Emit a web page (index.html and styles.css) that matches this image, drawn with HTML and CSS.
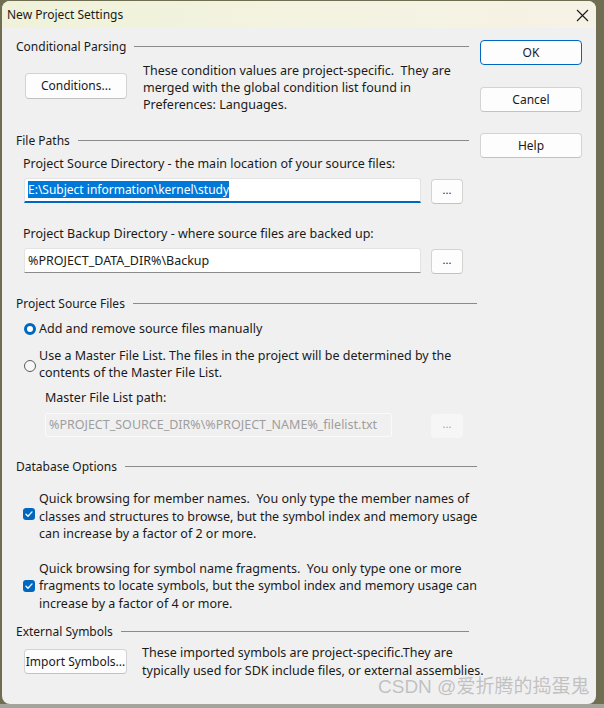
FILE: index.html
```html
<!DOCTYPE html>
<html>
<head>
<meta charset="utf-8">
<link rel="stylesheet" href="styles.css">
</head>
<body>
<div class="window">
  <div class="titlebar">
    <span class="title">New Project Settings</span>
    <svg class="close" width="13" height="13" viewBox="0 0 13 13"><path d="M1 1L12 12M12 1L1 12" stroke="#1a1a1a" stroke-width="1.1" fill="none"/></svg>
  </div>
  <div class="content">
    <div class="main">
      <div class="head short">Conditional Parsing</div>
      <div class="cond-row">
        <div class="btn btn-cond">Conditions...</div>
        <div class="para">These condition values are project-specific.&nbsp; They are<br>merged with the global condition list found in<br>Preferences: Languages.</div>
      </div>

      <div class="head short gap-fp">File Paths</div>
      <div class="label lbl-src">Project Source Directory - the main location of your source files:</div>
      <div class="field-row">
        <div class="input focused"><span class="sel">E:\Subject information\kernel\study</span></div>
        <div class="btn dots">...</div>
      </div>
      <div class="label lbl-bak">Project Backup Directory - where source files are backed up:</div>
      <div class="field-row">
        <div class="input">%PROJECT_DATA_DIR%\Backup</div>
        <div class="btn dots">...</div>
      </div>

      <div class="head gap-psf">Project Source Files</div>
      <div class="opt opt1">
        <span class="radio on"></span>
        <span>Add and remove source files manually</span>
      </div>
      <div class="opt opt2">
        <span class="radio"></span>
        <span>Use a Master File List. The files in the project will be determined by the<br>contents of the Master File List.</span>
      </div>
      <div class="label lbl-mfl">Master File List path:</div>
      <div class="field-row mfl-row">
        <div class="input disabled">%PROJECT_SOURCE_DIR%\%PROJECT_NAME%_filelist.txt</div>
        <div class="btn dots dis">...</div>
      </div>

      <div class="head gap-db">Database Options</div>
      <div class="opt chk1">
        <span class="check"><svg width="12" height="12" viewBox="0 0 12 12"><path d="M3 6.2L5 8.2L9 3.9" stroke="#fff" stroke-width="1.3" fill="none" stroke-linecap="round" stroke-linejoin="round"/></svg></span>
        <span class="tall">Quick browsing for member names.&nbsp; You only type the member names of<br>classes and structures to browse, but the symbol index and memory usage<br>can increase by a factor of 2 or more.</span>
      </div>
      <div class="opt chk2">
        <span class="check"><svg width="12" height="12" viewBox="0 0 12 12"><path d="M3 6.2L5 8.2L9 3.9" stroke="#fff" stroke-width="1.3" fill="none" stroke-linecap="round" stroke-linejoin="round"/></svg></span>
        <span class="tall">Quick browsing for symbol name fragments.&nbsp; You only type one or more<br>fragments to locate symbols, but the symbol index and memory usage can<br>increase by a factor of 4 or more.</span>
      </div>

      <div class="head short gap-ext">External Symbols</div>
      <div class="imp-row">
        <div class="btn btn-imp">Import Symbols...</div>
        <div class="para tall">These imported symbols are project-specific.They are<br>typically used for SDK include files, or external assemblies.</div>
      </div>
    </div>
    <div class="side">
      <div class="btn side-btn default">OK</div>
      <div class="btn side-btn">Cancel</div>
      <div class="btn side-btn">Help</div>
    </div>
  </div>
  <div class="watermark">CSDN @爱折腾的捣蛋鬼</div>
</div>
</body>
</html>
```

FILE: styles.css
```css
html, body {
  margin: 0;
  padding: 0;
}
body {
  width: 604px;
  height: 708px;
  overflow: hidden;
  background: linear-gradient(to bottom, #6f6e52 0, #6f6e52 704px, #a3a59c 704px);
  font-family: "Noto Sans", "Noto Sans CJK SC", sans-serif;
  font-size: 12.5px;
  line-height: 17px;
  color: #1a1a1a;
}
.window {
  position: relative;
  margin: 1px 0 0 2px;
  width: 594px;
  height: 703px;
  background: #f0f0f0;
  border-radius: 8px;
  overflow: hidden;
}
.titlebar {
  height: 27px;
  display: flex;
  align-items: center;
  justify-content: space-between;
  padding: 0 7px 0 5px;
  background: linear-gradient(to right, #eff2d9, #f4f3e2 60%, #f6f2e6);
}
.title {
  font-size: 12px;
}
.close {
  margin-top: 1px;
}
.content {
  display: flex;
  padding-left: 14px;
}
.main {
  width: 461px;
  flex: none;
  padding-top: 10px;
}
.side {
  width: 102px;
  flex: none;
  margin-left: 3px;
  padding-top: 12px;
  display: flex;
  flex-direction: column;
  gap: 21.5px;
}
.head {
  display: flex;
  align-items: center;
  height: 17px;
  font-size: 12px;
}
.head::after {
  content: "";
  flex: 1;
  height: 1px;
  background: #8a8a8a;
  margin-left: 8px;
}
.head.short {
  margin-right: 8px;
}
.btn {
  box-sizing: border-box;
  background: #fdfdfd;
  border: 1px solid #d3d3d3;
  border-bottom-color: #c2c2c2;
  border-radius: 4px;
  text-align: center;
  white-space: nowrap;
  font-size: 12px;
  flex: none;
}
.side-btn {
  height: 25px;
  line-height: 23px;
}
.side-btn.default {
  border: 1px solid #0067c0;
}
.cond-row {
  display: flex;
  align-items: center;
  margin-top: 7px;
  padding-left: 9px;
  gap: 16px;
}
.btn-cond {
  width: 102px;
  height: 26px;
  line-height: 24px;
  margin-bottom: 3px;
}
.para {
  white-space: nowrap;
  flex: none;
}
.gap-fp { margin-top: 19px; }
.label {
  white-space: nowrap;
}
.lbl-src {
  margin-top: 6px;
  padding-left: 7px;
}
.lbl-bak {
  margin-top: 21px;
  padding-left: 7px;
}
.field-row {
  display: flex;
  align-items: flex-start;
  gap: 10px;
  margin-top: 6px;
  padding-left: 8px;
}
.input {
  box-sizing: border-box;
  width: 397px;
  height: 25px;
  flex: none;
  background: #fff;
  border: 1px solid #e3e3e3;
  border-bottom: 1px solid #8a8a8a;
  border-radius: 3px 3px 0 0;
  padding: 3px 0 0 3px;
  white-space: nowrap;
  overflow: hidden;
}
.input.focused {
  border-bottom: 2px solid #0067c0;
  padding-top: 2px;
}
.sel {
  background: #0078d7;
  color: #fff;
  display: inline-block;
  line-height: 17px;
  font-size: 12px;
}
.dots {
  width: 32px;
  height: 25px;
  margin-top: 1px;
  line-height: 20px;
  font-size: 11px;
}
.gap-psf { margin-top: 21px; }
.opt {
  display: flex;
  align-items: center;
  gap: 3px;
  white-space: nowrap;
}
.opt1 {
  margin-top: 8px;
  padding-left: 8px;
}
.opt2 {
  margin-top: 10px;
  padding-left: 8px;
}
.opt2 .radio {
  margin-top: 3px;
}
.radio {
  box-sizing: border-box;
  width: 12px;
  height: 12px;
  border-radius: 50%;
  border: 1px solid #5c5c5c;
  background: #f7f7f7;
  flex: none;
}
.radio.on {
  border: 3.5px solid #0067c0;
  background: #fff;
}
.lbl-mfl {
  margin-top: 8px;
  padding-left: 29px;
}
.mfl-row {
  margin-top: 7px;
  padding-left: 29px;
  gap: 39px;
}
.input.disabled {
  width: 347px;
  height: 24px;
  background: #f0f0f0;
  border: 1px solid #fafafa;
  color: #9e9e9e;
  border-radius: 2px;
  padding-top: 2px;
}
.dots.dis {
  height: 24px;
  border: none;
  background: #f6f6f6;
  color: #a0a0a0;
}
.gap-db { margin-top: 20px; }
.check {
  box-sizing: border-box;
  width: 12px;
  height: 12px;
  border-radius: 3px;
  background: #0067c0;
  flex: none;
  display: flex;
}
.check svg {
  display: block;
}
.tall {
  line-height: 17.5px;
}
.chk1 {
  margin-top: 15px;
  padding-left: 7px;
  gap: 4px;
}
.chk1 .check {
  margin-bottom: 4px;
}
.chk2 {
  margin-top: 17px;
  padding-left: 7px;
  gap: 4px;
}
.gap-ext { margin-top: 11px; }
.imp-row {
  display: flex;
  align-items: center;
  gap: 15px;
  margin-top: 4px;
  padding-left: 8px;
}
.btn-imp {
  width: 103px;
  height: 25px;
  line-height: 23px;
  padding: 0;
  overflow: hidden;
  font-size: 12px;
}
.watermark {
  position: absolute;
  left: 376px;
  top: 675px;
  font-family: "Liberation Sans", "Noto Sans CJK SC", sans-serif;
  font-size: 19px;
  line-height: 22px;
  color: rgba(185, 185, 185, 0.85);
  white-space: nowrap;
}
```
